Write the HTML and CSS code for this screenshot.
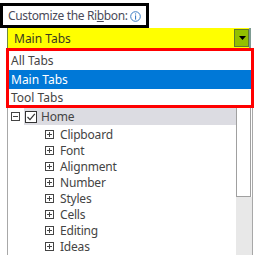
FILE: index.html
```html
<!DOCTYPE html>
<html>
<head>
    <title>Customize the Ribbon</title>
    <link rel="stylesheet" href="styles.css">
</head>
<body>
    <div class="title">
        <span class="title-text">Customize the Ri<u>b</u>bon:</span>
        <svg class="info" width="11" height="11" viewBox="0 0 11 11">
            <circle cx="5.5" cy="5.5" r="4.8" fill="none" stroke="#3b7cc4" stroke-width="1"/>
            <rect x="5" y="2.4" width="1.1" height="1.1" fill="#3b7cc4"/>
            <rect x="5" y="4.4" width="1.1" height="4.2" fill="#3b7cc4"/>
        </svg>
    </div>

    <div class="combo">
        <span class="combo-text">Main Tabs</span>
        <span class="combo-btn">
            <svg width="7" height="4" viewBox="0 0 7 4"><polygon points="0,0 7,0 3.5,4" fill="#000"/></svg>
        </span>
    </div>

    <div class="listbox">
        <div class="tree">
            <div class="row top">
                <span class="expander">
                    <svg width="9" height="9" viewBox="0 0 9 9"><rect x="0.5" y="0.5" width="8" height="8" fill="#fff" stroke="#444"/><line x1="2" y1="4.5" x2="7" y2="4.5" stroke="#444"/></svg>
                </span>
                <span class="node selected">
                    <svg class="check" width="12" height="12" viewBox="0 0 12 12"><rect x="0.5" y="0.5" width="11" height="11" fill="#fff" stroke="#333"/><polyline points="2.5,6 5,8.6 9.8,2.8" fill="none" stroke="#333" stroke-width="1.2"/></svg>
                    <span>Home</span>
                </span>
            </div>
            <div class="row child"><svg class="plus" width="9" height="9" viewBox="0 0 9 9"><rect x="0.5" y="0.5" width="8" height="8" fill="#fff" stroke="#444"/><path d="M2 4.5H7M4.5 2V7" stroke="#444"/></svg><span>Clipboard</span></div>
            <div class="row child"><svg class="plus" width="9" height="9" viewBox="0 0 9 9"><rect x="0.5" y="0.5" width="8" height="8" fill="#fff" stroke="#444"/><path d="M2 4.5H7M4.5 2V7" stroke="#444"/></svg><span>Font</span></div>
            <div class="row child"><svg class="plus" width="9" height="9" viewBox="0 0 9 9"><rect x="0.5" y="0.5" width="8" height="8" fill="#fff" stroke="#444"/><path d="M2 4.5H7M4.5 2V7" stroke="#444"/></svg><span>Alignment</span></div>
            <div class="row child"><svg class="plus" width="9" height="9" viewBox="0 0 9 9"><rect x="0.5" y="0.5" width="8" height="8" fill="#fff" stroke="#444"/><path d="M2 4.5H7M4.5 2V7" stroke="#444"/></svg><span>Number</span></div>
            <div class="row child"><svg class="plus" width="9" height="9" viewBox="0 0 9 9"><rect x="0.5" y="0.5" width="8" height="8" fill="#fff" stroke="#444"/><path d="M2 4.5H7M4.5 2V7" stroke="#444"/></svg><span>Styles</span></div>
            <div class="row child"><svg class="plus" width="9" height="9" viewBox="0 0 9 9"><rect x="0.5" y="0.5" width="8" height="8" fill="#fff" stroke="#444"/><path d="M2 4.5H7M4.5 2V7" stroke="#444"/></svg><span>Cells</span></div>
            <div class="row child"><svg class="plus" width="9" height="9" viewBox="0 0 9 9"><rect x="0.5" y="0.5" width="8" height="8" fill="#fff" stroke="#444"/><path d="M2 4.5H7M4.5 2V7" stroke="#444"/></svg><span>Editing</span></div>
            <div class="row child"><svg class="plus" width="9" height="9" viewBox="0 0 9 9"><rect x="0.5" y="0.5" width="8" height="8" fill="#fff" stroke="#444"/><path d="M2 4.5H7M4.5 2V7" stroke="#444"/></svg><span>Ideas</span></div>
            <div class="row top next">
                <span class="expander"></span>
                <span class="node"><span class="check-edge"></span></span>
            </div>
        </div>
        <div class="scroll">
            <div class="thumb"></div>
            <div class="track"></div>
        </div>
    </div>

    <ul class="dropdown">
        <li>All Tabs</li>
        <li class="active">Main Tabs</li>
        <li class="short">Tool Tabs</li>
    </ul>
</body>
</html>
```

FILE: styles.css
```css
body {
    margin: 0;
    width: 262px;
    height: 255px;
    overflow: hidden;
    background: #fff;
    font-family: "Segoe UI", "Noto Sans", "Open Sans", sans-serif;
    font-size: 12px;
    color: #444;
    position: relative;
}
.title {
    box-sizing: border-box;
    display: flex;
    align-items: center;
    width: 149px;
    height: 25px;
    margin-top: 3px;
    padding-left: 5px;
    border: 3px solid #000;
    color: #4a4a5a;
}
.title-text {
    white-space: nowrap;
    letter-spacing: -0.35px;
}
.info {
    flex-shrink: 0;
    margin-left: 2px;
    margin-top: 1px;
}
.combo {
    box-sizing: border-box;
    display: flex;
    width: 244px;
    height: 20px;
    margin-left: 7px;
    background: #ffff00;
    border-left: 1px solid #6d8a3c;
    border-right: 2px solid #7f9c92;
}
.combo-text {
    flex: 1;
    padding-left: 6px;
    line-height: 21px;
    color: #3a3a20;
}
.combo-btn {
    box-sizing: border-box;
    display: flex;
    align-items: center;
    justify-content: center;
    width: 15px;
    margin-top: 1px;
    margin-bottom: 1px;
    padding-left: 2px;
    background: #93c000;
    border: 1px solid #5e7a30;
}
.listbox {
    display: flex;
    width: 244px;
    height: 207px;
    margin-left: 7px;
    border-left: 1px solid #a8a8a8;
    border-right: 1px solid #a8a8a8;
}
.tree {
    flex: 1;
    padding-top: 60px;
    overflow: hidden;
}
.row {
    display: flex;
    align-items: center;
    height: 16px;
    letter-spacing: -0.2px;
}
.row.top {
    height: 17px;
    margin-bottom: 1px;
}
.expander {
    display: flex;
    width: 13px;
    margin-left: 3px;
}
.node {
    flex: 1;
    display: flex;
    align-items: center;
    gap: 4px;
    height: 100%;
    padding-left: 1px;
}
.node.selected {
    background: #dcdce2;
}
.row.child {
    padding-left: 37px;
}
.plus {
    margin-right: 6px;
}
.row.next {
    margin-top: -3px;
    align-items: flex-start;
}
.check-edge {
    width: 12px;
    height: 1px;
    background: #333;
}
.scroll {
    display: flex;
    flex-direction: column;
    width: 16px;
}
.thumb {
    box-sizing: border-box;
    width: 15px;
    height: 149px;
    border: 1px solid #a0a0a0;
    background: #fff;
}
.track {
    flex: 1;
    background: #e8e8e8;
}
.dropdown {
    position: absolute;
    left: 6px;
    top: 48px;
    box-sizing: border-box;
    width: 248px;
    margin: 0;
    padding: 0;
    list-style: none;
    border: 3px solid #ff0000;
    background: #fff;
}
.dropdown li {
    height: 19px;
    line-height: 19px;
    padding-left: 2px;
    color: #444;
}
.dropdown li.active {
    background: #0078d7;
    color: #fff;
}
.dropdown li.short {
    height: 16px;
    line-height: 17px;
}
```
